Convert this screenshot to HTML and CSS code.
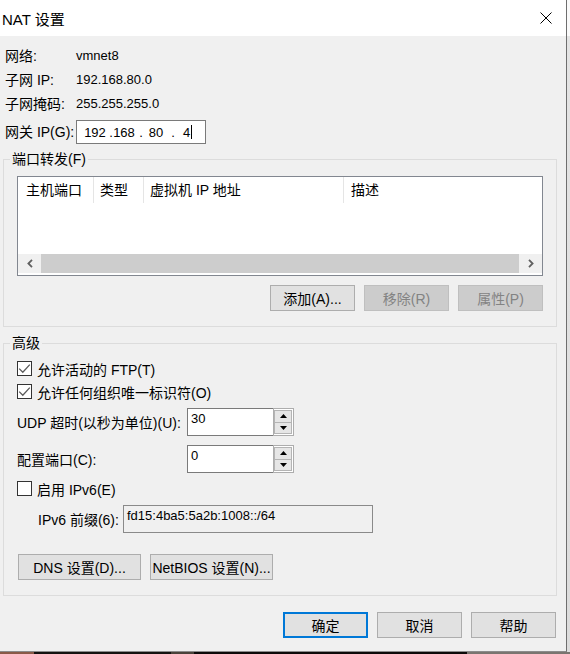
FILE: index.html
```html
<!DOCTYPE html>
<html lang="zh-CN">
<head>
<meta charset="utf-8">
<title>NAT 设置</title>
<link rel="stylesheet" href="styles.css">
</head>
<body>
<div class="screen">
  <div class="dialog">
    <div class="titlebar">
      <span class="title">NAT 设置</span>
      <svg class="close" width="12" height="12" viewBox="0 0 12 12"><path d="M0.5 0.5L11.5 11.5M11.5 0.5L0.5 11.5" stroke="#000" stroke-width="1" fill="none"/></svg>
    </div>
    <div class="body">
      <div class="info">
        <span class="lbl">网络:</span><span class="val">vmnet8</span>
        <span class="lbl">子网 IP:</span><span class="val">192.168.80.0</span>
        <span class="lbl">子网掩码:</span><span class="val">255.255.255.0</span>
        <span class="lbl">网关 IP(G):</span>
        <div class="ipbox">
          <span class="oct o1">192</span><span class="dot d1">.</span><span class="oct o2">168</span><span class="dot d2">.</span><span class="oct o3">80</span><span class="dot d3">.</span><span class="oct o4">4</span><span class="caret"></span>
        </div>
      </div>

      <fieldset class="group port">
        <legend>端口转发(F)</legend>
        <div class="listbox">
          <div class="lhead">
            <span class="col c1">主机端口</span>
            <span class="col">类型</span>
            <span class="col">虚拟机 IP 地址</span>
            <span class="col last">描述</span>
          </div>
          <div class="lbody"></div>
          <div class="hscroll">
            <div class="sbtn"><svg width="6" height="9" viewBox="0 0 6 9"><path d="M5 0.8L1.4 4.5L5 8.2" stroke="#606060" stroke-width="1.8" fill="none"/></svg></div>
            <div class="thumb"></div>
            <div class="sbtn"><svg width="6" height="9" viewBox="0 0 6 9"><path d="M1 0.8L4.6 4.5L1 8.2" stroke="#606060" stroke-width="1.8" fill="none"/></svg></div>
          </div>
        </div>
        <div class="btnrow">
          <button class="btn">添加(A)...</button>
          <button class="btn" disabled>移除(R)</button>
          <button class="btn" disabled>属性(P)</button>
        </div>
      </fieldset>

      <fieldset class="group adv">
        <legend>高级</legend>
        <div class="checkrow">
          <span class="cb"><svg width="13" height="13" viewBox="0 0 13 13"><polyline points="1.2,6.6 4.8,10.2 11.8,2.6" stroke="#5a5a5a" stroke-width="1.3" fill="none"/></svg></span>
          <span class="cblabel">允许活动的 FTP(T)</span>
        </div>
        <div class="checkrow">
          <span class="cb"><svg width="13" height="13" viewBox="0 0 13 13"><polyline points="1.2,6.6 4.8,10.2 11.8,2.6" stroke="#5a5a5a" stroke-width="1.3" fill="none"/></svg></span>
          <span class="cblabel">允许任何组织唯一标识符(O)</span>
        </div>
        <div class="spinrow first">
          <span class="spinlbl">UDP 超时(以秒为单位)(U):</span>
          <div class="spin">
            <div class="spinval">30</div>
            <div class="spinbtns">
              <div class="sp"><svg width="7" height="4" viewBox="0 0 7 4"><path d="M0 4L3.5 0L7 4Z" fill="#000"/></svg></div>
              <div class="sp"><svg width="7" height="4" viewBox="0 0 7 4"><path d="M0 0L3.5 4L7 0Z" fill="#000"/></svg></div>
            </div>
          </div>
        </div>
        <div class="spinrow second">
          <span class="spinlbl">配置端口(C):</span>
          <div class="spin">
            <div class="spinval">0</div>
            <div class="spinbtns">
              <div class="sp"><svg width="7" height="4" viewBox="0 0 7 4"><path d="M0 4L3.5 0L7 4Z" fill="#000"/></svg></div>
              <div class="sp"><svg width="7" height="4" viewBox="0 0 7 4"><path d="M0 0L3.5 4L7 0Z" fill="#000"/></svg></div>
            </div>
          </div>
        </div>
        <div class="checkrow ipv6">
          <span class="cb"></span>
          <span class="cblabel">启用 IPv6(E)</span>
        </div>
        <div class="prefixrow">
          <span class="prefixlbl">IPv6 前缀(6):</span>
          <div class="prefixval">fd15:4ba5:5a2b:1008::/64</div>
        </div>
        <div class="dnsrow">
          <button class="btn wide">DNS 设置(D)...</button>
          <button class="btn wide">NetBIOS 设置(N)...</button>
        </div>
      </fieldset>

      <div class="footer">
        <button class="btn default">确定</button>
        <button class="btn">取消</button>
        <button class="btn">帮助</button>
      </div>
    </div>
  </div>
  <div class="backdrop"></div>
</div>
<div class="floor"></div>
</body>
</html>
```

FILE: styles.css
```css
* { box-sizing: border-box; }
html, body { margin: 0; padding: 0; }
body {
  width: 570px;
  height: 654px;
  overflow: hidden;
  background: #1c1815;
  font-family: "Liberation Sans", "Noto Sans CJK SC", sans-serif;
  font-size: 14px;
  color: #000;
}
.screen { display: flex; height: 652px; }
.dialog {
  width: 567px;
  height: 652px;
  background: #f0f0f0;
  border-right: 1px solid #6e6e6e;
  border-bottom: 1px solid #8c8c8c;
  display: flex;
  flex-direction: column;
}
.backdrop { flex: 1; background: linear-gradient(#fafafa 0, #fafafa 36px, #e4e4e4 36px, #dcdcdc 100%); }
.floor {
  height: 2px;
  background: linear-gradient(90deg, #8a5a48 0, #8a5a48 6%, #141210 6%, #141210 30%, #4a423a 30%, #4a423a 34%, #0c0a09 34%, #0c0a09 82%, #7a7570 82%, #7a7570 100%);
}

/* title bar */
.titlebar {
  height: 36px;
  flex: none;
  background: #fff;
  display: flex;
  align-items: center;
  justify-content: space-between;
}
.title { font-size: 15px; padding-left: 2px; }
.close { margin-right: 14px; }

/* body */
.body { flex: 1; padding: 0 0 0 3px; }

.info {
  display: grid;
  grid-template-columns: 71px auto;
  grid-template-rows: 24px 24px 24px 28px;
  align-items: end;
  margin: 8px 0 0 2px;
}
.lbl, .val { line-height: 24px; }
.val { font-size: 13px; }
.ipbox {
  width: 130px;
  height: 24px;
  background: #fff;
  border: 1px solid #7a7a7a;
  display: flex;
  align-items: center;
  padding-left: 4px;
  font-size: 13px;
}
.oct, .dot { display: inline-block; text-align: center; }
.o1 { width: 28px; }
.d1 { width: 4px; }
.o2 { width: 22px; }
.d2 { width: 12px; }
.o3 { width: 18px; }
.d3 { width: 16px; }
.o4 { text-align: left; padding-left: 2px; }
.caret { display: inline-block; width: 1px; height: 14px; background: #000; margin-left: 1px; }

/* group boxes */
.group {
  width: 554px;
  margin: 0;
  border: 1px solid #dcdcdc;
  padding: 8px 13px 15px 13px;
  min-inline-size: 0;
}
.group legend {
  font-size: 14px;
  line-height: 18px;
  padding: 0 2px;
  margin-left: -7px;
}
.port { margin-top: 6px; }
.adv { margin-top: 7px; padding-top: 5px; }

.listbox {
  height: 100px;
  background: #fff;
  border: 1px solid #828790;
  display: flex;
  flex-direction: column;
}
.lhead {
  height: 26px;
  display: grid;
  grid-template-columns: 76px 50px 200px 1fr;
}
.col {
  line-height: 26px;
  padding-left: 6px;
  border-right: 1px solid #e5e5e5;
  white-space: nowrap;
}
.col.c1 { padding-left: 8px; }
.col.last { border-right: none; padding-left: 7px; }
.lbody { flex: 1; }
.hscroll {
  height: 19px;
  margin-bottom: 2px;
  display: flex;
  background: #f0f0f0;
}
.sbtn { width: 23px; display: flex; align-items: center; justify-content: center; }
.thumb { flex: 1; background: #cdcdcd; }

.btnrow {
  display: flex;
  justify-content: flex-end;
  gap: 9px;
  margin-top: 9px;
}
.btn {
  width: 85px;
  height: 26px;
  padding: 0;
  font-family: "Liberation Sans", "Noto Sans CJK SC", sans-serif;
  font-size: 14px;
  color: #000;
  background: #e1e1e1;
  border: 1px solid #adadad;
  white-space: nowrap;
}
.btn:disabled { background: #cccccc; border-color: #bfbfbf; color: #838383; }
.btn.default { border: 2px solid #0078d7; }
.btn.wide { width: 123px; }

/* advanced */
.checkrow { height: 23px; display: flex; align-items: center; }
.cb {
  width: 15px;
  height: 15px;
  border: 1px solid #333;
  background: #fff;
  display: flex;
}
.cblabel { margin-left: 5px; white-space: nowrap; }

.spinrow { height: 28px; display: flex; align-items: center; }
.spinrow.first { margin-top: 5px; }
.spinrow.second { margin-top: 9px; }
.spinlbl { width: 170px; white-space: nowrap; }
.spin { display: flex; height: 28px; }
.spinval {
  width: 86px;
  height: 28px;
  background: #fff;
  border: 1px solid #7a7a7a;
  border-right: none;
  font-size: 13px;
  line-height: 16px;
  padding: 2px 0 0 3px;
}
.spinbtns {
  width: 21px;
  height: 28px;
  border: 1px solid #adadad;
  background: #fff;
  display: flex;
  flex-direction: column;
  padding: 1px 1px 1px 0;
}
.sp {
  flex: 1;
  background: #e6e6e6;
  border: 1px solid #b4b4b4;
  display: flex;
  align-items: center;
  justify-content: center;
}
.sp + .sp { border-top: none; }

.checkrow.ipv6 { margin-top: 4px; }
.prefixrow { height: 28px; display: flex; margin-top: 5px; padding-left: 21px; align-items: center; }
.prefixlbl { width: 85px; white-space: nowrap; }
.prefixval {
  width: 250px;
  height: 28px;
  border: 1px solid #8a8a8a;
  background: #f0f0f0;
  font-size: 13px;
  line-height: 16px;
  padding: 2px 0 0 3px;
}
.dnsrow { display: flex; gap: 9px; margin-top: 21px; padding-left: 1px; }

.footer {
  display: flex;
  justify-content: flex-end;
  gap: 9px;
  margin-top: 16px;
  padding-right: 10px;
}
```
